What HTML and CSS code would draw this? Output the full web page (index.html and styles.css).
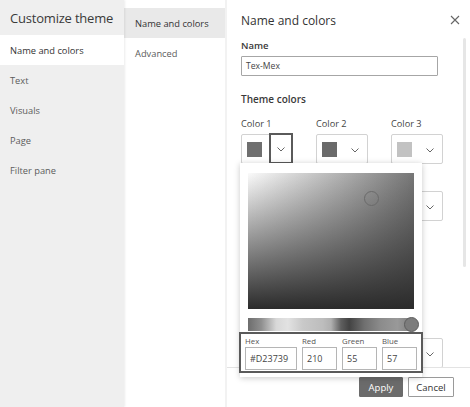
FILE: index.html
```html
<!DOCTYPE html>
<html lang="en">
<head>
<meta charset="utf-8">
<title>Customize theme</title>
<link rel="stylesheet" href="styles.css">
</head>
<body>
<div class="app">
  <nav class="side">
    <h1 class="side-title">Customize theme</h1>
    <ul class="side-list">
      <li class="side-item active">Name and colors</li>
      <li class="side-item">Text</li>
      <li class="side-item">Visuals</li>
      <li class="side-item">Page</li>
      <li class="side-item">Filter pane</li>
    </ul>
  </nav>
  <nav class="sub">
    <ul class="sub-list">
      <li class="sub-item active">Name and colors</li>
      <li class="sub-item">Advanced</li>
    </ul>
  </nav>
  <section class="editor">
    <header class="ed-head">
      <h2 class="ed-title">Name and colors</h2>
      <button class="close" aria-label="Close">
        <svg width="10" height="10" viewBox="0 0 10 10"><path d="M1 1L9 9M9 1L1 9" stroke="#666" stroke-width="1.1" fill="none"/></svg>
      </button>
    </header>
    <div class="ed-body">
      <div class="ed-scroll">
        <label class="field-label">Name</label>
        <div class="text-input">Tex-Mex</div>
        <h3 class="section-title">Theme colors</h3>
        <div class="color-grid">
          <div class="cell"><span class="c-label">Color 1</span><div class="picker"><span class="swatch s1"></span><span class="drop focus"><svg width="8" height="5" viewBox="0 0 8 5"><path d="M0.5 0.5L4 4L7.5 0.5" stroke="#666" fill="none"/></svg></span></div></div>
          <div class="cell"><span class="c-label">Color 2</span><div class="picker"><span class="swatch s2"></span><span class="drop"><svg width="8" height="5" viewBox="0 0 8 5"><path d="M0.5 0.5L4 4L7.5 0.5" stroke="#666" fill="none"/></svg></span></div></div>
          <div class="cell"><span class="c-label">Color 3</span><div class="picker"><span class="swatch s3"></span><span class="drop"><svg width="8" height="5" viewBox="0 0 8 5"><path d="M0.5 0.5L4 4L7.5 0.5" stroke="#666" fill="none"/></svg></span></div></div>
          <div class="cell"><span class="c-label">Color 4</span><div class="picker"><span class="swatch s2"></span><span class="drop"><svg width="8" height="5" viewBox="0 0 8 5"><path d="M0.5 0.5L4 4L7.5 0.5" stroke="#666" fill="none"/></svg></span></div></div>
          <div class="cell"><span class="c-label">Color 5</span><div class="picker"><span class="swatch s3"></span><span class="drop"><svg width="8" height="5" viewBox="0 0 8 5"><path d="M0.5 0.5L4 4L7.5 0.5" stroke="#666" fill="none"/></svg></span></div></div>
          <div class="cell"><span class="c-label">Color 6</span><div class="picker"><span class="swatch s1"></span><span class="drop"><svg width="8" height="5" viewBox="0 0 8 5"><path d="M0.5 0.5L4 4L7.5 0.5" stroke="#666" fill="none"/></svg></span></div></div>
          <div class="cell"><span class="c-label">Color 7</span><div class="picker"><span class="swatch s2"></span><span class="drop"><svg width="8" height="5" viewBox="0 0 8 5"><path d="M0.5 0.5L4 4L7.5 0.5" stroke="#666" fill="none"/></svg></span></div></div>
          <div class="cell"><span class="c-label">Color 8</span><div class="picker"><span class="swatch s3"></span><span class="drop"><svg width="8" height="5" viewBox="0 0 8 5"><path d="M0.5 0.5L4 4L7.5 0.5" stroke="#666" fill="none"/></svg></span></div></div>
        </div>
        <h3 class="section-title sent">Divergent colors</h3>
        <div class="color-grid">
          <div class="cell"><span class="c-label">Max</span><div class="picker"><span class="swatch s2"></span><span class="drop"><svg width="8" height="5" viewBox="0 0 8 5"><path d="M0.5 0.5L4 4L7.5 0.5" stroke="#666" fill="none"/></svg></span></div></div>
          <div class="cell"><span class="c-label">Center</span><div class="picker"><span class="swatch s3"></span><span class="drop"><svg width="8" height="5" viewBox="0 0 8 5"><path d="M0.5 0.5L4 4L7.5 0.5" stroke="#666" fill="none"/></svg></span></div></div>
          <div class="cell"><span class="c-label">Min</span><div class="picker"><span class="swatch s1"></span><span class="drop"><svg width="8" height="5" viewBox="0 0 8 5"><path d="M0.5 0.5L4 4L7.5 0.5" stroke="#666" fill="none"/></svg></span></div></div>
        </div>
      </div>
      <div class="scroll-thumb"></div>
    </div>
    <footer class="ed-foot">
      <button class="btn primary">Apply</button>
      <button class="btn">Cancel</button>
    </footer>

    <div class="popup">
      <div class="sv-area"><span class="sv-handle"></span></div>
      <div class="hue"><span class="hue-thumb"></span></div>
      <div class="values">
        <div class="val hex"><span class="v-label">Hex</span><span class="v-input">#D23739</span></div>
        <div class="val num"><span class="v-label">Red</span><span class="v-input">210</span></div>
        <div class="val num"><span class="v-label">Green</span><span class="v-input">55</span></div>
        <div class="val num"><span class="v-label">Blue</span><span class="v-input">57</span></div>
      </div>
    </div>
  </section>
</div>
</body>
</html>
```
FILE: styles.css
```css
* { box-sizing: border-box; }
html, body { margin: 0; padding: 0; }
body {
  width: 470px;
  height: 407px;
  overflow: hidden;
  font-family: "Open Sans", "Noto Sans", sans-serif;
  color: #333;
  background: #fff;
}
ul { list-style: none; margin: 0; padding: 0; }
h1, h2, h3 { margin: 0; font-weight: normal; }
button { font-family: inherit; }

.app {
  display: flex;
  height: 407px;
}

/* left nav */
.side {
  width: 124px;
  flex: none;
  background: #efefef;
  box-shadow: 1px 0 2px rgba(0,0,0,0.08);
  position: relative;
  z-index: 1;
}
.side-title {
  height: 35px;
  padding-left: 10px;
  display: flex;
  align-items: center;
  font-size: 13px;
  color: #3a3a3a;
  letter-spacing: -0.2px;
}
.side-item {
  height: 30px;
  padding-left: 10px;
  display: flex;
  align-items: center;
  font-size: 9.3px;
  color: #5c5c5c;
}
.side-item.active {
  background: #fff;
  color: #333;
}

/* sub nav */
.sub {
  width: 103px;
  flex: none;
  background: #fff;
  padding-top: 8px;
  border-right: 2px solid #f2f2f2;
}
.sub-item {
  height: 30px;
  padding-left: 11px;
  display: flex;
  align-items: center;
  font-size: 9.3px;
  color: #5c5c5c;
}
.sub-item.active {
  background: #e9e9e9;
  color: #333;
}

/* editor */
.editor {
  flex: 1;
  position: relative;
  display: flex;
  flex-direction: column;
  height: 407px;
}
.ed-head {
  height: 38px;
  flex: none;
  display: flex;
  align-items: center;
  justify-content: space-between;
  padding: 0 9px 0 14px;
}
.ed-title {
  font-size: 12px;
  color: #333;
  margin-top: 2px;
}
.close {
  border: 0;
  background: none;
  padding: 0;
  width: 12px;
  height: 12px;
  display: flex;
  align-items: center;
  justify-content: center;
  margin-top: 1px;
}
.ed-body {
  height: 329px;
  flex: none;
  position: relative;
  overflow: hidden;
}
.ed-scroll {
  padding: 1px 0 0 14px;
}
.scroll-thumb {
  position: absolute;
  left: 236px;
  top: 0;
  width: 3px;
  height: 229px;
  background: #e6e6e6;
  border-radius: 2px;
}
.field-label {
  display: block;
  height: 14px;
  line-height: 14px;
  font-size: 9.5px;
  font-weight: 600;
  color: #3a3a3a;
}
.text-input {
  margin-top: 3px;
  width: 197px;
  height: 20px;
  border: 1px solid #a6a6a6;
  border-radius: 1px;
  padding-left: 4px;
  font-size: 8.6px;
  line-height: 18px;
  color: #444;
}
.section-title {
  margin-top: 16px;
  height: 14px;
  line-height: 14px;
  font-size: 10px;
  font-weight: 600;
  color: #3a3a3a;
}
.section-title.sent { margin-top: 16px; }
.color-grid {
  margin-top: 11px;
  display: grid;
  grid-template-columns: repeat(3, 52px);
  column-gap: 23px;
  row-gap: 10px;
}
.section-title.sent + .color-grid { margin-top: 13px; }
.cell {
  display: flex;
  flex-direction: column;
}
.c-label {
  height: 14px;
  line-height: 14px;
  font-size: 9.2px;
  color: #444;
}
.picker {
  margin-top: 3px;
  height: 30px;
  border: 1px solid #d2d2d2;
  border-radius: 2px;
  display: flex;
  align-items: center;
  position: relative;
}
.swatch {
  width: 15px;
  height: 15px;
  margin-left: 5px;
  flex: none;
}
.s1 { background: #6f6f6f; }
.s2 { background: #6a6a6a; }
.s3 { background: #c2c2c2; }
.drop {
  margin-left: auto;
  width: 24px;
  height: 28px;
  display: flex;
  align-items: center;
  justify-content: center;
  padding-top: 2px;
}
.drop.focus {
  height: 31px;
  margin-top: -2px;
  margin-bottom: -1px;
  margin-right: -1px;
  border: 2px solid #5a5a5a;
}

/* footer */
.ed-foot {
  flex: 1;
  border-top: 1px solid #e3e3e3;
  display: flex;
  justify-content: flex-end;
  align-items: flex-start;
  gap: 5px;
  padding: 9px 16px 0 0;
}
.btn {
  height: 20px;
  border: 1px solid #9a9a9a;
  background: #fff;
  font-size: 9.5px;
  color: #333;
  padding: 0;
  width: 46px;
  border-radius: 1px;
}
.btn.primary {
  width: 44px;
  background: #6b6b6b;
  border-color: #6b6b6b;
  color: #fff;
}

/* popup */
.popup {
  position: absolute;
  left: 13px;
  top: 163px;
  width: 182px;
  height: 214px;
  background: #fff;
  box-shadow: 0 1px 6px rgba(0,0,0,0.22);
  padding: 10px 0 0 8px;
  z-index: 5;
}
.sv-area {
  position: relative;
  width: 166px;
  height: 136px;
  background:
    linear-gradient(to top, #2b2b2b, rgba(43,43,43,0)),
    linear-gradient(to right, #fbfbfb, #777);
}
.sv-handle {
  position: absolute;
  left: 116px;
  top: 18px;
  width: 15px;
  height: 15px;
  border-radius: 50%;
  border: 1.5px solid #6a6a6a;
}
.hue {
  position: relative;
  margin-top: 9px;
  width: 166px;
  height: 13px;
  background: linear-gradient(to right,
    #6d6d6d 0%, #8f8f8f 8%, #d8d8d8 17%, #e2e2e2 24%, #c9c9c9 33%,
    #bdbdbd 45%, #b0b0b0 50%, #5f5f5f 56%, #434343 61%, #6f6f6f 70%,
    #8c8c8c 80%, #999 90%, #7a7a7a 100%);
}
.hue-thumb {
  position: absolute;
  left: 156px;
  top: -1px;
  width: 15px;
  height: 15px;
  border-radius: 50%;
  background: #7c7c7c;
  border: 1px solid #5e5e5e;
}
.values {
  margin: 1px 0 0 -9px;
  width: 184px;
  height: 41px;
  border: 2px solid #5a5a5a;
  display: flex;
  gap: 5px;
  padding: 2px 0 0 4px;
}
.val {
  display: flex;
  flex-direction: column;
}
.v-label {
  height: 10px;
  line-height: 10px;
  font-size: 7.8px;
  color: #555;
}
.v-input {
  margin-top: 1px;
  height: 23px;
  border: 1px solid #b5b5b5;
  padding-left: 4px;
  font-size: 9px;
  line-height: 21px;
  color: #444;
}
.hex .v-input { width: 52px; }
.num .v-input { width: 35px; }
```
